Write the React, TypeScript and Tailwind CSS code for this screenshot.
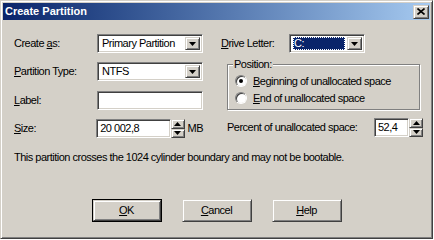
import React from "react";

const face = "bg-[#d4d0c8]";
const sunken =
  "border border-t-[#808080] border-l-[#808080] border-b-white border-r-white shadow-[inset_1px_1px_0_#404040,inset_-1px_-1px_0_#d4d0c8]";
const raised =
  "border border-t-[#d4d0c8] border-l-[#d4d0c8] border-b-[#404040] border-r-[#404040] shadow-[inset_1px_1px_0_#fff,inset_-1px_-1px_0_#808080]";

function U({ children }: { children: React.ReactNode }) {
  return <span className="underline underline-offset-[1px]">{children}</span>;
}

function Arrow({ up }: { up?: boolean }) {
  return (
    <svg width="7" height="4" viewBox="0 0 7 4" className="block">
      {up ? <path d="M3.5 0 L7 4 L0 4 Z" fill="#000" /> : <path d="M0 0 L7 0 L3.5 4 Z" fill="#000" />}
    </svg>
  );
}

function Select({ value, width, focus }: { value: string; width: string; focus?: boolean }) {
  return (
    <div className={`${sunken} ${width} h-[19px] bg-white flex items-stretch p-[2px]`}>
      <div className="flex-1 flex items-center pl-[1px] pr-[2px] whitespace-nowrap">
        {focus ? (
          <div className="flex-1 h-full bg-[#0a246a] text-white flex items-center pl-[1px] outline outline-1 outline-dotted outline-[#fff] -outline-offset-1">
            {value}
          </div>
        ) : (
          <span className="pl-[1px]">{value}</span>
        )}
      </div>
      <div className={`${raised} ${face} w-[15px] flex items-center justify-center`}>
        <Arrow />
      </div>
    </div>
  );
}

function Field({ value, width }: { value?: string; width: string }) {
  return (
    <div className={`${sunken} ${width} h-[19px] bg-white flex items-center pl-[3px] whitespace-nowrap`}>{value}</div>
  );
}

function Spinner() {
  return (
    <div className="flex flex-col w-[14px] h-[19px]">
      <div className={`${raised} ${face} flex-1 flex items-center justify-center`}>
        <Arrow up />
      </div>
      <div className={`${raised} ${face} flex-1 flex items-center justify-center`}>
        <Arrow />
      </div>
    </div>
  );
}

function Radio({ checked, children }: { checked?: boolean; children: React.ReactNode }) {
  return (
    <div className="flex items-center h-[16px] whitespace-nowrap">
      <div className="w-[12px] h-[12px] rounded-full border border-t-[#808080] border-l-[#808080] border-b-white border-r-white">
        <div className="w-full h-full rounded-full bg-white shadow-[inset_1px_1px_0_#404040] flex items-center justify-center">
          {checked && <div className="w-[4px] h-[4px] rounded-full bg-black" />}
        </div>
      </div>
      <span className="ml-[6px]">{children}</span>
    </div>
  );
}

function Btn({ children, primary }: { children: React.ReactNode; primary?: boolean }) {
  return (
    <div className={`w-[70px] h-[23px] ${primary ? "border border-black" : ""}`}>
      <div className={`${raised} ${face} w-full h-full flex items-center justify-center`}>{children}</div>
    </div>
  );
}

export default function App() {
  return (
    <div className="w-[434px] h-[240px] bg-white">
      <div
        className={`w-[433px] h-[239px] ${face} border border-t-[#d4d0c8] border-l-[#d4d0c8] border-b-[#404040] border-r-[#404040] shadow-[inset_1px_1px_0_#fff,inset_-1px_-1px_0_#808080] p-[2px] flex flex-col text-black font-['Liberation_Sans',Arial,sans-serif] text-[11px] tracking-[-0.5px] leading-none`}
      >
        <div className="h-[17px] bg-gradient-to-r from-[#0a246a] to-[#a6caf0] flex items-center pl-[2px] pr-[1px]">
          <span className="text-white font-bold text-[11px] tracking-normal flex-1">Create Partition</span>
          <div className={`${raised} ${face} w-[16px] h-[14px] flex items-center justify-center`}>
            <svg width="8" height="7" viewBox="0 0 8 7">
              <path d="M0.5 0.5 L7.5 6.5 M7.5 0.5 L0.5 6.5" stroke="#000" strokeWidth="1.6" />
            </svg>
          </div>
        </div>

        <div className="flex pl-[11px] pt-[14px]">
          <div className="w-[189px] flex flex-col">
            <div className="flex items-center h-[19px]">
              <span className="w-[83px] whitespace-nowrap">Create <U>a</U>s:</span>
              <Select value="Primary Partition" width="w-[106px]" />
            </div>
            <div className="flex items-center h-[19px] mt-[9px]">
              <span className="w-[83px] whitespace-nowrap"><U>P</U>artition Type:</span>
              <Select value="NTFS" width="w-[106px]" />
            </div>
            <div className="flex items-center h-[19px] mt-[10px]">
              <span className="w-[83px] whitespace-nowrap"><U>L</U>abel:</span>
              <Field width="w-[106px]" />
            </div>
            <div className="flex items-center h-[19px] mt-[9px]">
              <span className="w-[83px] whitespace-nowrap"><U>S</U>ize:</span>
              <Field value="20 002,8" width="w-[75px]" />
              <Spinner />
              <span className="ml-[3px]">MB</span>
            </div>
          </div>

          <div className="ml-[18px] w-[202px] flex flex-col">
            <div className="flex items-center h-[19px]">
              <span className="w-[68px] whitespace-nowrap"><U>D</U>rive Letter:</span>
              <Select value="C:" width="w-[76px]" focus />
            </div>
            <fieldset className="mt-[6px] ml-[6px] w-[193px] h-[51px] border border-[#808080] shadow-[1px_1px_0_#fff,inset_1px_1px_0_#fff] px-[7px]">
              <legend className="ml-[-2px] px-[1px] bg-[#d4d0c8]">Position:</legend>
              <div className="flex flex-col gap-[1px] mt-[3px]">
                <Radio checked>
                  <U>B</U>eginning of unallocated space
                </Radio>
                <Radio>
                  <U>E</U>nd of unallocated space
                </Radio>
              </div>
            </fieldset>
            <div className="flex items-center h-[19px] mt-[8px] ml-[6px]">
              <span className="w-[147px] whitespace-nowrap">Percent of unallocated space:</span>
              <Field value="52,4" width="w-[35px]" />
              <Spinner />
            </div>
          </div>
        </div>

        <div className="pl-[11px] mt-[14px] whitespace-nowrap">This partition crosses the 1024 cylinder boundary and may not be bootable.</div>

        <div className="flex justify-center gap-[20px] mt-[36px]">
          <Btn primary>
            <U>O</U>K
          </Btn>
          <Btn>
            <U>C</U>ancel
          </Btn>
          <Btn>
            <U>H</U>elp
          </Btn>
        </div>
      </div>
    </div>
  );
}
